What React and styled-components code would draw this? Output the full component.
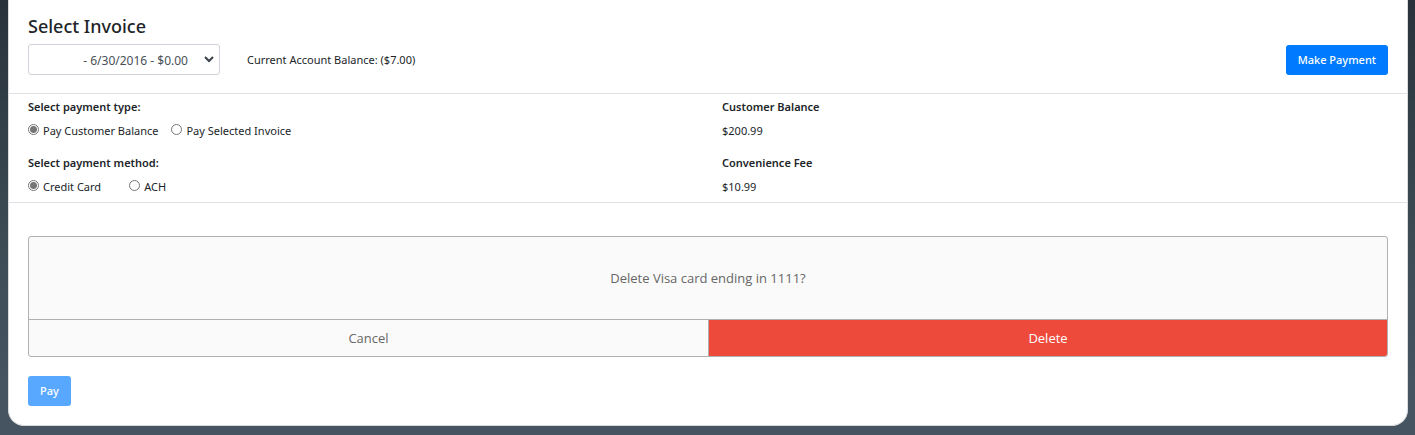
import React, { useState } from "react";
import styled, { createGlobalStyle, css } from "styled-components";

const GlobalStyle = createGlobalStyle`
  *, *::before, *::after { box-sizing: border-box; }
  html { min-height: 100%; background: #465360; }
  body {
    margin: 0;
    min-height: 100vh;
    padding: 0 7px 9px 8px;
    background: linear-gradient(#29323a, #33404a 30%, #3d4b55 55%, #465462 90%);
    color: #212529;
    font: 11px/18px "Segoe UI", "Noto Sans", "Open Sans", sans-serif;
  }
  button, select, input { font: inherit; }
`;

const Card = styled.main`
  background: #fff;
  border: 1px solid #d9dbdd;
  border-top: 0;
  border-radius: 0 0 16px 16px;
  padding-bottom: 19px;
`;

const Section = styled.section`
  padding: 0 19px;
`;

const Header = styled(Section)`
  padding-top: 14px;
  padding-bottom: 18px;
  border-bottom: 1px solid #dee2e6;
`;

const Title = styled.h1`
  margin: 0 0 6px;
  font-size: 18px;
  line-height: 24px;
  font-weight: 500;
`;

const Toolbar = styled.div`
  display: flex;
  align-items: center;
  gap: 27px;
`;

const SelectBox = styled.span`
  position: relative;
  width: 192px;
`;

const InvoiceSelect = styled.select`
  display: block;
  width: 100%;
  height: 31px;
  padding: 2px 31px 0 8px;
  border: 1px solid #ced4da;
  border-radius: 3px;
  background: #fff;
  color: #495057;
  font-size: 12px;
  appearance: none;
  text-align: right;
  text-align-last: right;
`;

const Chevron = styled.svg`
  position: absolute;
  top: 11px;
  right: 6px;
  width: 10px;
  height: 8px;
  fill: none;
  stroke: #3b4248;
  stroke-width: 2;
  pointer-events: none;
`;

const Button = styled.button`
  height: 30px;
  padding: 0 12px;
  border: 0;
  border-radius: 3px;
  background: #007bff;
  color: #fff;
  font-weight: 500;
  cursor: pointer;
  &:disabled { opacity: 0.65; cursor: default; }
`;

const PushRight = styled.div`
  margin-left: auto;
`;

const Options = styled(Section)`
  display: grid;
  grid-template-columns: 1fr 1fr;
  column-gap: 28px;
  row-gap: 14px;
  padding-top: 4px;
  padding-bottom: 6px;
  border-bottom: 1px solid #dee2e6;
`;

const heading = css`
  margin: 0 0 6px;
  padding: 0;
  line-height: 18px;
  font-weight: 600;
`;

const FieldGroup = styled.fieldset`
  margin: 0;
  padding: 0;
  border: 0;
  min-width: 0;
`;

const Legend = styled.legend`${heading}`;

const RadioRow = styled.div`
  display: flex;
  gap: ${(p) => p.$gap}px;
`;

const RadioLabel = styled.label`
  display: flex;
  gap: 4px;
`;

const Radio = styled.input`
  appearance: none;
  width: 11px;
  height: 11px;
  margin: 2px 0 0;
  border: 1px solid #767676;
  border-radius: 50%;
  background: #fff;
  &:checked {
    background: radial-gradient(circle, #767676 3px, #fff 4px);
  }
`;

const Amount = styled.dl`
  margin: 0;
`;

const AmountLabel = styled.dt`${heading}`;

const AmountValue = styled.dd`
  margin: 0;
`;

const Payment = styled(Section)`
  padding-top: 33px;
`;

const Confirm = styled.div`
  margin-bottom: 19px;
  overflow: hidden;
  border: 1px solid #b0b0b0;
  border-radius: 3px;
  background: #fafafa;
  color: #666;
  font-family: "Segoe UI", "Open Sans", sans-serif;
  font-size: 13px;
`;

const Message = styled.p`
  margin: 0;
  padding: 32px 16px;
  text-align: center;
`;

const Actions = styled.div`
  display: grid;
  grid-template-columns: 1fr 1fr;
  border-top: 1px solid #b0b0b0;
`;

const Action = styled.button`
  height: 36px;
  padding: 0;
  border: 0;
  background: transparent;
  color: inherit;
  cursor: pointer;
  ${(p) =>
    p.$danger &&
    css`
      border-left: 1px solid #b0b0b0;
      background: #ed4a3b;
      color: #fff;
    `}
`;

function RadioGroup({ title, name, options, gap }) {
  const [value, setValue] = useState(options[0]);
  return (
    <FieldGroup>
      <Legend>{title}</Legend>
      <RadioRow $gap={gap}>
        {options.map((option) => (
          <RadioLabel key={option}>
            <Radio
              type="radio"
              name={name}
              checked={value === option}
              onChange={() => setValue(option)}
            />
            {option}
          </RadioLabel>
        ))}
      </RadioRow>
    </FieldGroup>
  );
}

function Balance({ label, value }) {
  return (
    <Amount>
      <AmountLabel>{label}</AmountLabel>
      <AmountValue>{value}</AmountValue>
    </Amount>
  );
}

export default function App() {
  return (
    <>
      <GlobalStyle />
      <Card>
        <Header>
          <Title id="invoice-title">Select Invoice</Title>
          <Toolbar>
            <SelectBox>
              <InvoiceSelect aria-labelledby="invoice-title">
                <option>- 6/30/2016 - $0.00</option>
              </InvoiceSelect>
              <Chevron viewBox="0 0 10 8" aria-hidden="true">
                <path d="M1 2l4 4 4-4" />
              </Chevron>
            </SelectBox>
            <span>Current Account Balance: ($7.00)</span>
            <PushRight>
              <Button type="button">Make Payment</Button>
            </PushRight>
          </Toolbar>
        </Header>
        <Options>
          <RadioGroup
            title="Select payment type:"
            name="type"
            options={["Pay Customer Balance", "Pay Selected Invoice"]}
            gap={13}
          />
          <Balance label="Customer Balance" value="$200.99" />
          <RadioGroup
            title="Select payment method:"
            name="method"
            options={["Credit Card", "ACH"]}
            gap={28}
          />
          <Balance label="Convenience Fee" value="$10.99" />
        </Options>
        <Payment>
          <Confirm role="alertdialog" aria-labelledby="confirm-message">
            <Message id="confirm-message">Delete Visa card ending in 1111?</Message>
            <Actions>
              <Action type="button">Cancel</Action>
              <Action type="button" $danger>Delete</Action>
            </Actions>
          </Confirm>
          <Button type="button" disabled>Pay</Button>
        </Payment>
      </Card>
    </>
  );
}
